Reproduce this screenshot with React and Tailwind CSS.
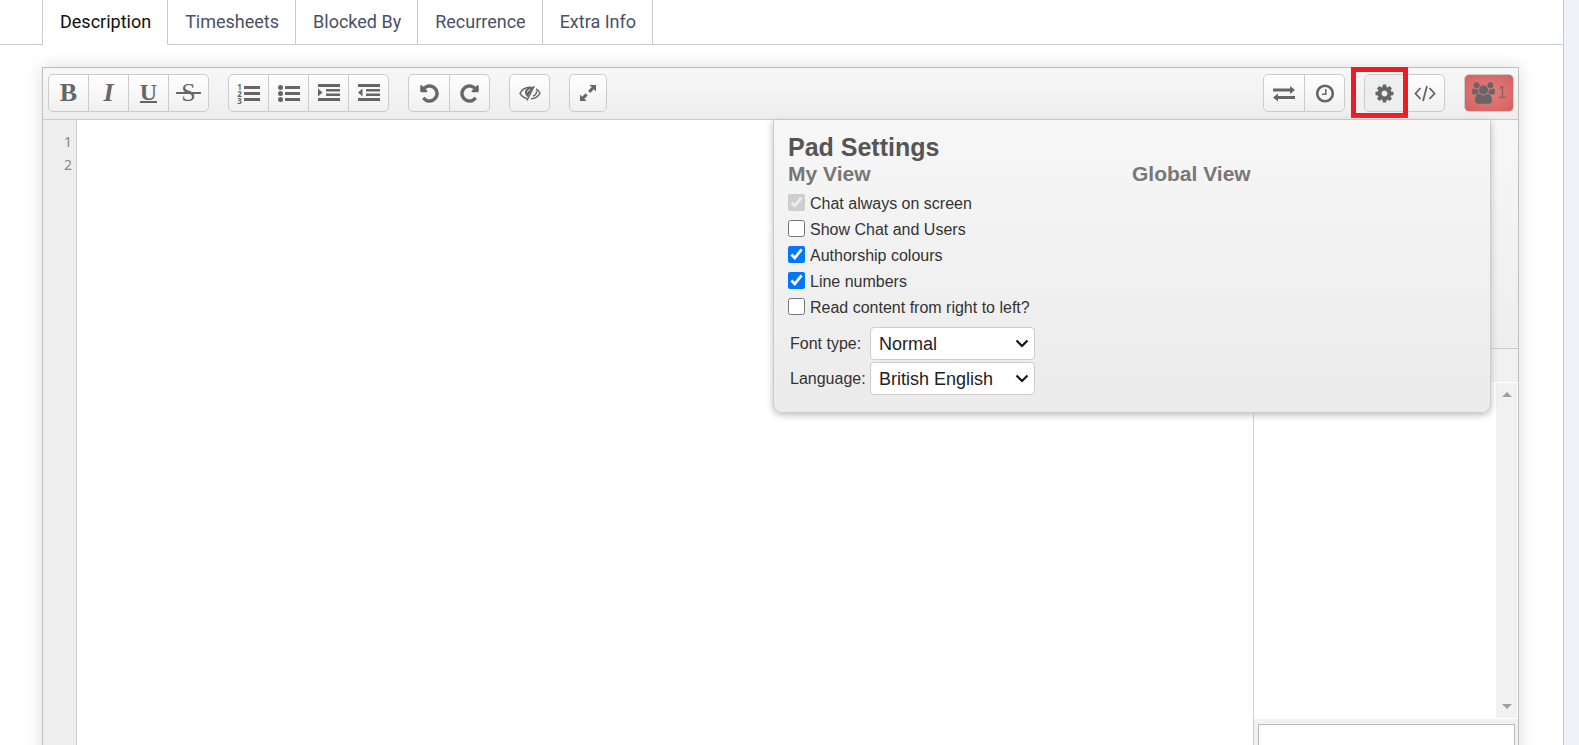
import { useState } from "react";

const TABS = ["Description", "Timesheets", "Blocked By", "Recurrence", "Extra Info"];

const VIEW_OPTIONS = [
  { id: "stickychat", label: "Chat always on screen", checked: true, disabled: true },
  { id: "chatandusers", label: "Show Chat and Users", checked: false },
  { id: "colorscheck", label: "Authorship colours", checked: true },
  { id: "linenoscheck", label: "Line numbers", checked: true },
  { id: "rtlcheck", label: "Read content from right to left?", checked: false },
];

const UNDO_PATH =
  "M1664 896q0 156-61 298t-164 245-245 164-298 61q-172 0-327-72.5t-264-204.5q-7-10-6.5-22.5t8.5-20.5l137-138q10-9 25-9 16 2 23 12 73 95 179 147t225 52q104 0 198.5-40.5t163.5-109.5 109.5-163.5 40.5-198.5-40.5-198.5-109.5-163.5-163.5-109.5-198.5-40.5q-98 0-188 35.5t-160 101.5l137 138q31 30 14 69-17 40-59 40h-448q-26 0-45-19t-19-45v-448q0-42 40-59 39-17 69 14l130 129q107-101 244.5-156.5t284.5-55.5q156 0 298 61t245 164 164 245 61 298z";

const COG_PATH =
  "M1152 896q0-106-75-181t-181-75-181 75-75 181 75 181 181 75 181-75 75-181zm512-109v222q0 12-8 23t-20 13l-185 28q-19 54-39 91 35 50 107 138 10 12 10 25t-9 23q-27 37-99 108t-94 71q-12 0-26-9l-138-108q-44 23-91 38-16 136-29 186-7 28-36 28h-222q-14 0-24.5-8.5t-11.5-21.5l-28-184q-49-16-90-37l-141 107q-10 9-25 9-14 0-25-11-126-114-165-168-7-10-7-23 0-12 8-23 15-21 51-66.5t54-70.5q-27-50-41-99l-183-27q-13-2-21-12.5t-8-23.5v-222q0-12 8-23t19-13l186-28q14-46 39-92-40-57-107-138-10-12-10-24 0-10 9-23 26-36 98.5-107.5t94.5-71.5q13 0 26 10l138 107q44-23 91-38 16-136 29-186 7-28 36-28h222q14 0 24.5 8.5t11.5 21.5l28 184q49 16 90 37l142-107q9-9 24-9 13 0 25 10 129 119 165 170 7 8 7 22 0 12-8 23-15 21-51 66.5t-54 70.5q26 50 41 98l183 28q13 2 21 12.5t8 23.5z";

const USERS_PATH =
  "M593 896q-162 5-265 128h-134q-82 0-138-40.5t-56-118.5q0-353 124-353 6 0 43.5 21t97.5 42.5 119 21.5q67 0 133-23-5 37-5 66 0 139 81 256zm1071 637q0 120-73 189.5t-194 69.5h-874q-121 0-194-69.5t-73-189.5q0-53 3.5-103.5t14-109 26.5-108.5 43-97.5 62-81 85.5-53.5 111.5-20q10 0 43 21.5t73 48 107 48 135 21.5 135-21.5 107-48 73-48 43-21.5q61 0 111.5 20t85.5 53.5 62 81 43 97.5 26.5 108.5 14 109 3.5 103.5zm-1024-1277q0 106-75 181t-181 75-181-75-75-181 75-181 181-75 181 75 75 181zm704 384q0 159-112.5 271.5t-271.5 112.5-271.5-112.5-112.5-271.5 112.5-271.5 271.5-112.5 271.5 112.5 112.5 271.5zm576 225q0 78-56 118.5t-138 40.5h-134q-103-123-265-128 81-117 81-256 0-29-5-66 66 23 133 23 59 0 119-21.5t97.5-42.5 43.5-21q124 0 124 353zm-128-609q0 106-75 181t-181 75-181-75-75-181 75-181 181-75 181 75 75 181z";

const OrderedListIcon = () => (
  <span className="flex gap-[2px]">
    <span className="flex flex-col font-['Noto_Sans'] text-[8px] font-bold leading-[7px]">
      <span>1</span>
      <span>2</span>
      <span>3</span>
    </span>
    <svg width="16" height="21" viewBox="0 0 16 21" fill="currentColor">
      <path d="M0 3h16v3H0zM0 9h16v3H0zM0 15h16v3H0z" />
    </svg>
  </span>
);

const UnorderedListIcon = () => (
  <svg width="22" height="22" viewBox="0 0 22 22" fill="currentColor">
    <circle cx="2.5" cy="5.500" r="2.500" />
    <circle cx="2.5" cy="11.500" r="2.500" />
    <circle cx="2.5" cy="17.500" r="2.500" />
    <path d="M7 4h15v3H7zM7 10h15v3H7zM7 16h15v3H7z" />
  </svg>
);

const IndentIcon = () => (
  <svg width="22" height="22" viewBox="0 0 22 22" fill="currentColor">
    <path d="M0 2h22v3H0zM8 7h14v2.500H8zM8 11.500h14v2.500H8zM0 16h22v3H0zM0 6.500l4.500 4-4.500 4z" />
  </svg>
);

const OutdentIcon = () => (
  <svg width="22" height="22" viewBox="0 0 22 22" fill="currentColor">
    <path d="M0 2h22v3H0zM8 7h14v2.500H8zM8 11.500h14v2.500H8zM0 16h22v3H0zM4.500 6.500l-4.500 4 4.500 4z" />
  </svg>
);

const UndoIcon = () => (
  <svg width="21" height="21" viewBox="0 0 1792 1792" fill="currentColor" stroke="currentColor" strokeWidth="40">
    <path d={UNDO_PATH} />
  </svg>
);

const RedoIcon = () => (
  <svg width="21" height="21" viewBox="0 0 1792 1792" fill="currentColor" stroke="currentColor" strokeWidth="40">
    <path d={UNDO_PATH} transform="translate(1792 0) scale(-1 1)" />
  </svg>
);

const EyeOffIcon = () => (
  <svg width="22" height="18" viewBox="0 0 22 18" fill="none" stroke="currentColor" strokeWidth="1.400">
    <path d="M8.500 14.800C5 14 2.500 11.800 1 9.300c2-3.500 5.500-6 10-6 1 0 2 .1 3 .4" />
    <path d="M17 5C19 6 20.200 7.600 21 9.300c-1.800 3-5 5.300-9 5.500" />
    <path d="M15.300 2L8 16.500M17.500 7c.2 2.300-1 4.200-3.500 5.200" />
    <path d="M14 3.800C9 2.800 6 5.200 6 8.200c0 2 1 3.800 2.900 4.900z" fill="currentColor" stroke="none" />
    <path d="M8.500 8.300c0-1.500 1-2.500 2.500-2.500" stroke="#f6f6f6" strokeWidth="1" />
  </svg>
);

const ExpandIcon = () => (
  <svg width="18" height="18" viewBox="0 0 18 18" fill="currentColor">
    <path d="M10.500 1H17v6.500l-2.200-2.200-3.600 3.600-2.100-2.100 3.600-3.600zM7.500 17H1v-6.500l2.200 2.200 3.400-3.400 2.100 2.100-3.400 3.400z" />
  </svg>
);

const ExchangeIcon = () => (
  <svg width="22" height="18" viewBox="0 0 22 18" fill="currentColor">
    <path d="M0 4.500h17V2l5 4-5 4V7.500H0zM22 15H5v2.500l-5-4 5-4V12h17z" />
  </svg>
);

const ClockIcon = () => (
  <svg width="20" height="20" viewBox="0 0 20 20" fill="none" stroke="currentColor">
    <circle cx="10" cy="10.500" r="7.800" strokeWidth="2.600" />
    <path d="M10.800 6v5.300H7" strokeWidth="1.500" />
  </svg>
);

const CogIcon = () => (
  <svg width="21" height="21" viewBox="0 0 1792 1792" fill="currentColor">
    <path d={COG_PATH} />
  </svg>
);

const CodeIcon = () => (
  <svg width="22" height="18" viewBox="0 0 22 18" fill="none" stroke="currentColor" strokeWidth="1.800">
    <path d="M6.500 4L1.500 9.500l5 5.500M15.500 4l5 5.500-5 5.500M13 2L9 17" />
  </svg>
);

const UsersIcon = () => (
  <svg width="23" height="22" viewBox="0 0 1920 1792" fill="currentColor">
    <path d={USERS_PATH} />
  </svg>
);

const ButtonGroup = ({ children }) => (
  <div className="flex h-[38px] divide-x divide-[#ccc] overflow-hidden rounded-[5px] border border-[#ccc] bg-linear-to-b from-white to-[#f0f0f0] text-[#666]">
    {children}
  </div>
);

const ToolButton = ({ title, className = "w-10 last:w-[39px]", children }) => (
  <button type="button" title={title} aria-label={title} className={`flex items-center justify-center ${className}`}>
    {children}
  </button>
);

const Toolbar = () => (
  <div className="flex h-[52px] justify-between border-b border-[#ccc] bg-linear-to-b from-[#f7f7f7] to-[#eee] pl-[5px] pr-1 pt-[6px]">
    <div className="flex gap-[19px]">
      <ButtonGroup>
        <ToolButton title="Bold">
          <span className="font-['Liberation_Serif'] text-[26px] font-bold leading-none">B</span>
        </ToolButton>
        <ToolButton title="Italic">
          <span className="font-['Liberation_Serif'] text-[26px] font-bold italic leading-none">I</span>
        </ToolButton>
        <ToolButton title="Underline">
          <span className="border-b-2 border-[#666] font-['Liberation_Serif'] text-[24px] font-bold leading-[18px]">U</span>
        </ToolButton>
        <ToolButton title="Strikethrough">
          <span className="font-['Liberation_Serif'] text-[26px] leading-none line-through">&thinsp;S&thinsp;</span>
        </ToolButton>
      </ButtonGroup>
      <ButtonGroup>
        <ToolButton title="Ordered list"><OrderedListIcon /></ToolButton>
        <ToolButton title="Unordered list"><UnorderedListIcon /></ToolButton>
        <ToolButton title="Indent"><IndentIcon /></ToolButton>
        <ToolButton title="Outdent"><OutdentIcon /></ToolButton>
      </ButtonGroup>
      <ButtonGroup>
        <ToolButton title="Undo" className="w-[41px]"><UndoIcon /></ToolButton>
        <ToolButton title="Redo"><RedoIcon /></ToolButton>
      </ButtonGroup>
      <ButtonGroup>
        <ToolButton title="Clear authorship colours"><EyeOffIcon /></ToolButton>
      </ButtonGroup>
      <ButtonGroup>
        <ToolButton title="Fullscreen" className="w-9"><ExpandIcon /></ToolButton>
      </ButtonGroup>
    </div>

    <div className="flex gap-[19px]">
      <ButtonGroup>
        <ToolButton title="Import/Export" className="w-[41px]"><ExchangeIcon /></ToolButton>
        <ToolButton title="Timeslider"><ClockIcon /></ToolButton>
      </ButtonGroup>
      <div className="relative">
        <ButtonGroup>
          <ToolButton title="Settings" className="w-10 bg-[#eee]"><CogIcon /></ToolButton>
          <ToolButton title="Embed"><CodeIcon /></ToolButton>
        </ButtonGroup>
        {/* highlight around the settings button */}
        <div className="pointer-events-none absolute -left-[13px] -top-[7px] h-[51px] w-[57px] border-5 border-[#ed1c24]" />
      </div>
      <button
        type="button"
        title="Users"
        className="flex h-[38px] w-[50px] items-center justify-center gap-[3px] rounded-[5px] border border-[#ccc] bg-radial from-[#e08080] to-[#d65f5f] font-['Liberation_Sans'] text-base text-[#8a6464]"
      >
        <span className="text-[#666]"><UsersIcon /></span>
        1
      </button>
    </div>
  </div>
);

const SettingSelect = ({ id, label, options }) => (
  <div className="flex items-center">
    <label htmlFor={id} className="w-20 text-base">{label}</label>
    <div className="relative">
      <select
        id={id}
        className="block h-[33px] w-[165px] appearance-none rounded-[4px] border border-[#ccc] bg-white px-2 text-lg text-[#222]"
      >
        {options.map((option) => (
          <option key={option}>{option}</option>
        ))}
      </select>
      <svg
        className="pointer-events-none absolute right-[6px] top-3"
        width="14"
        height="9"
        viewBox="0 0 14 9"
        fill="none"
        stroke="#111"
        strokeWidth="2.200"
      >
        <path d="M1.500 1.500L7 7l5.500-5.500" />
      </svg>
    </div>
  </div>
);

const SettingsPopup = () => {
  const [options, setOptions] = useState(VIEW_OPTIONS);

  const toggle = (id) => {
    setOptions(options.map((o) => (o.id === id ? { ...o, checked: !o.checked } : o)));
  };

  return (
    <div className="absolute right-[27px] top-0 grid h-[293px] w-[718px] grid-cols-2 content-start rounded-b-[9px] border border-t-0 border-[#ccc] bg-linear-to-b from-[#f7f7f7] to-[#ebebeb] px-[14px] pt-[13px] font-['Liberation_Sans'] text-[#333] shadow-[0_2px_7px_#bbb]">
      <h1 className="col-span-2 text-[25px] font-bold leading-7 text-[#555]">Pad Settings</h1>
      <div>
        <h2 className="text-[21px] font-bold leading-[26px] text-[#777]">My View</h2>
        <div className="pt-1">
          {options.map((o) => (
            <div key={o.id} className="flex h-[26px] items-center gap-[5px]">
              <input
                id={o.id}
                type="checkbox"
                checked={o.checked}
                disabled={o.disabled}
                onChange={() => toggle(o.id)}
                className="mb-1 size-[17px]"
              />
              <label htmlFor={o.id} className="text-base">{o.label}</label>
            </div>
          ))}
        </div>
        <div className="flex flex-col gap-[2px] pl-[2px] pt-[6px]">
          <SettingSelect id="viewfontmenu" label="Font type:" options={["Normal", "Monospaced"]} />
          <SettingSelect id="languagemenu" label="Language:" options={["British English", "Deutsch"]} />
        </div>
      </div>
      <h2 className="text-[21px] font-bold leading-[26px] text-[#777]">Global View</h2>
    </div>
  );
};

const ChatPanel = () => (
  <div className="flex w-[265px] flex-col border-l border-[#ccc] bg-[#f1f1f1]">
    <div className="h-[229px] border-b border-[#ccc] bg-linear-to-b from-[#f7f7f7] to-[#eee]" />
    <div className="h-[33px]" />
    <div className="flex grow justify-end border border-white bg-white">
      <div className="flex w-[21px] flex-col items-center justify-between bg-[#f1f1f1] py-[9px] text-[#a0a0a0]">
        <svg width="10" height="5" fill="currentColor"><path d="M5 0l5 5H0z" /></svg>
        <svg width="10" height="5" fill="currentColor"><path d="M0 0h10L5 5z" /></svg>
      </div>
    </div>
    <div className="h-[46px] pl-1 pr-[3px] pt-[5px]">
      <input aria-label="Chat message" className="block h-8 w-full border border-[#bbb] bg-white px-1 outline-none" />
    </div>
  </div>
);

const App = () => {
  const [activeTab, setActiveTab] = useState("Description");

  return (
    <div className="flex h-screen overflow-hidden bg-[#f1f2f8]">
      <div className="flex grow flex-col border-r border-[#c9cad2] bg-white">
        {/* Tabs */}
        <div className="flex h-[45px] font-[Roboto] text-lg">
          <div className="box-content w-[42px] border-b border-r border-[#c9cad2]" />
          {TABS.map((tab) => (
            <button
              key={tab}
              type="button"
              onClick={() => setActiveTab(tab)}
              className={`border-b border-r border-r-[#c9cad2] pl-[17px] pr-4 ${
                activeTab === tab ? "border-b-white text-[#111]" : "border-b-[#c9cad2] text-[#4a5068]"
              }`}
            >
              {tab}
            </button>
          ))}
          <div className="grow border-b border-[#c9cad2]" />
        </div>

        {/* Editor, runs past the bottom of the window */}
        <div className="-mb-5 ml-[42px] mr-11 mt-[22px] flex grow flex-col border border-b-0 border-[#bfbfbf] shadow-[0_0_16px_#ddd]">
          <Toolbar />
          <div className="relative flex grow">
            <div className="w-[34px] border-r border-[#ccc] bg-[#eee] pr-1 pt-[10px] text-right font-['Noto_Sans'] text-sm leading-[23px] text-[#888]">
              <div>1</div>
              <div>2</div>
            </div>
            <div className="grow bg-white" />
            <ChatPanel />
            <SettingsPopup />
          </div>
        </div>
      </div>
      <div className="w-[15px] shrink-0" />
    </div>
  );
};

export default App;
